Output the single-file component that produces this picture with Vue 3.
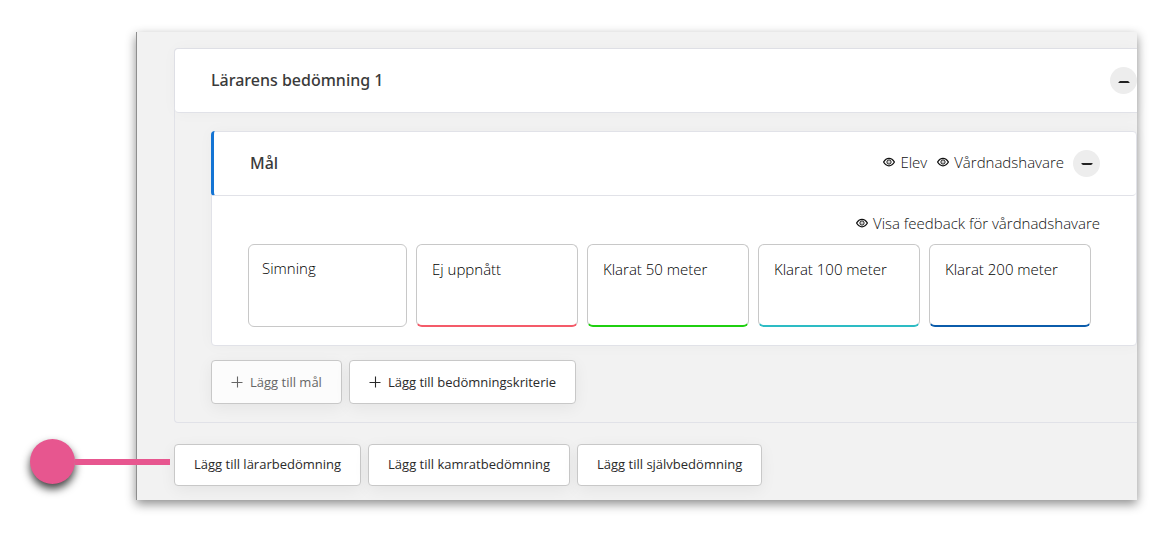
<script setup>
import { ref } from 'vue'

const criteria = [
  { label: 'Simning', tone: 'plain' },
  { label: 'Ej uppnått', tone: 'red' },
  { label: 'Klarat 50 meter', tone: 'green' },
  { label: 'Klarat 100 meter', tone: 'teal' },
  { label: 'Klarat 200 meter', tone: 'blue' },
]
const viewers = ['Elev', 'Vårdnadshavare']
const addActions = ['Lägg till lärarbedömning', 'Lägg till kamratbedömning', 'Lägg till självbedömning']
const assessmentOpen = ref(true)
const goalOpen = ref(true)
</script>

<template>
  <main class="page">
    <div class="panel">
      <section class="assessment">
        <header class="assessment-head">
          <h1 class="title">Lärarens bedömning 1</h1>
          <button class="toggle" type="button" aria-label="Visa eller dölj bedömning" @click="assessmentOpen = !assessmentOpen">
            <svg width="14" height="14" viewBox="0 0 14 14"><path d="M1.500 9V8.200L3 7H11L12.500 8.200V9Z" fill="#222" /></svg>
          </button>
        </header>
        <div v-if="assessmentOpen" class="assessment-body">
          <section class="goal">
            <header class="goal-head">
              <h2 class="title">Mål</h2>
              <div class="viewers">
                <span v-for="v in viewers" :key="v" class="seen">
                  <svg class="eye" width="12" height="10" viewBox="0 0 12 10" fill="none" stroke="#111">
                    <path d="M.6 5C2 2.500 3.700 1.300 6 1.300S10 2.500 11.400 5C10 7.500 8.300 8.800 6 8.800S2 7.500 .6 5Z" stroke-width="1.300" />
                    <circle cx="6" cy="5" r="2.100" stroke-width="1" />
                    <circle cx="6" cy="5" r=".5" fill="#111" stroke="none" />
                  </svg>{{ v }}
                </span>
              </div>
              <button class="toggle" type="button" aria-label="Visa eller dölj mål" @click="goalOpen = !goalOpen">
                <svg width="14" height="14" viewBox="0 0 14 14"><path d="M1.500 7H12.500V8L11 9H3L1.500 8Z" fill="#222" /></svg>
              </button>
            </header>
            <div v-if="goalOpen" class="goal-body">
              <p class="seen feedback">
                <svg class="eye" width="12" height="10" viewBox="0 0 12 10" fill="none" stroke="#111">
                  <path d="M.6 5C2 2.500 3.700 1.300 6 1.300S10 2.500 11.400 5C10 7.500 8.300 8.800 6 8.800S2 7.500 .6 5Z" stroke-width="1.300" />
                  <circle cx="6" cy="5" r="2.100" stroke-width="1" />
                  <circle cx="6" cy="5" r=".5" fill="#111" stroke="none" />
                </svg>Visa feedback för vårdnadshavare
              </p>
              <div class="criteria">
                <div v-for="c in criteria" :key="c.label" class="criterion" :class="c.tone">{{ c.label }}</div>
              </div>
            </div>
          </section>
          <div class="goal-actions">
            <button v-for="(a, i) in ['Lägg till mål', 'Lägg till bedömningskriterie']" :key="a" class="btn tall" type="button" :disabled="i === 0">
              <svg width="12" height="12" viewBox="0 0 12 12"><path d="M.5 6.500H11.500M6.500 .5V11.500" stroke="currentColor" stroke-width="1.100" /></svg>
              {{ a }}
            </button>
          </div>
        </div>
      </section>
      <div class="add-actions">
        <button v-for="a in addActions" :key="a" class="btn" type="button">{{ a }}</button>
      </div>
    </div>
    <div class="pointer"><span class="dot"></span><span class="line"></span></div>
  </main>
</template>

<style>
body {
  margin: 0;
  background: #fff;
}
</style>

<style scoped>
.page {
  position: relative;
  padding: 32px 12px 35px 136px;
  font-family: "Open Sans", "Noto Sans", sans-serif;
  font-size: 15px;
  line-height: 18px;
  color: #3a3a3a;
}
.page * {
  box-sizing: border-box;
}
.panel {
  padding: 16px 0 14px 37px;
  background: #f2f2f2;
  border-left: 1px solid #8e8e8e;
  box-shadow: 0 4px 10px rgba(0, 0, 0, 0.45);
}
.assessment {
  border: 1px solid #e1e2e8;
  border-right: 0;
  border-radius: 4px 0 0 4px;
}
.assessment-head {
  display: flex;
  align-items: center;
  justify-content: space-between;
  height: 64px;
  padding-left: 36px;
  background: #fff;
  border-bottom: 1px solid #e1e2e8;
  border-radius: 4px 0 0 4px;
  box-shadow: 0 0 16px rgba(0, 0, 0, 0.03);
}
.title {
  margin: 0;
  font-family: "Noto Sans", "Open Sans", sans-serif;
  font-size: 16px;
  font-weight: 500;
  line-height: 24px;
}
.assessment-head .title {
  padding-bottom: 2px;
}
.toggle {
  display: flex;
  align-items: center;
  justify-content: center;
  width: 27px;
  height: 27px;
  padding: 0;
  border: 0;
  border-radius: 50%;
  background: #ededed;
}
.assessment-body {
  padding: 18px 0 18px 36px;
}
.goal {
  background: #fff;
  border: 1px solid #e1e2e8;
  border-radius: 4px;
  box-shadow: 0 0 16px rgba(0, 0, 0, 0.03);
}
.goal-head {
  display: flex;
  align-items: center;
  height: 65px;
  margin: -1px 0 0 -1px;
  padding: 0 36px 0 36px;
  border-left: 3px solid #1474d4;
  border-bottom: 1px solid #e1e2e8;
  border-radius: 4px;
}
.viewers {
  display: flex;
  gap: 10px;
  margin: 0 9px 0 auto;
  padding-bottom: 2px;
}
.seen {
  display: flex;
  align-items: center;
  gap: 5px;
  font-weight: 300;
  color: #111;
}
.eye {
  flex: none;
}
.goal-body {
  padding: 18px 45px 18px 36px;
}
.feedback {
  justify-content: flex-end;
  margin: 0 -9px 12px 0;
}
.criteria {
  display: grid;
  grid-template-columns: 159fr repeat(4, 162fr);
  gap: 9px;
}
.criterion {
  height: 83px;
  padding: 15px 15px;
  border: 1px solid #c8c8c8;
  border-radius: 6px;
  font-weight: 300;
  color: #000;
}
.plain {
  padding: 14px 13px;
}
.red {
  border-bottom: 2px solid #f45b69;
}
.green {
  border-bottom: 2px solid #1fd010;
}
.teal {
  border-bottom: 2px solid #2dbcc4;
}
.blue {
  border-bottom: 2px solid #0b5cab;
}
.goal-actions {
  display: flex;
  gap: 7px;
  margin-top: 14px;
}
.add-actions {
  display: flex;
  gap: 7px;
  margin-top: 21px;
}
.btn {
  display: flex;
  align-items: center;
  gap: 7px;
  height: 42px;
  padding: 0 19px 2px;
  border: 1px solid #c8c8c8;
  border-radius: 4px;
  background: #fff;
  box-shadow: 0 4px 16px rgba(0, 0, 0, 0.06);
  font: inherit;
  font-size: 13px;
  color: #2a2a2a;
}
.tall {
  height: 44px;
  padding-bottom: 0;
}
.btn:disabled {
  background: #fcfcfc;
  color: #666;
}
.pointer {
  position: absolute;
  left: 30px;
  bottom: 51px;
  display: flex;
  align-items: center;
}
.dot {
  width: 45px;
  height: 45px;
  border-radius: 50%;
  background: #e7568f;
  box-shadow: 0 5px 8px rgba(0, 0, 0, 0.75);
}
.line {
  width: 95px;
  height: 6px;
  background: #e7568f;
}
</style>
